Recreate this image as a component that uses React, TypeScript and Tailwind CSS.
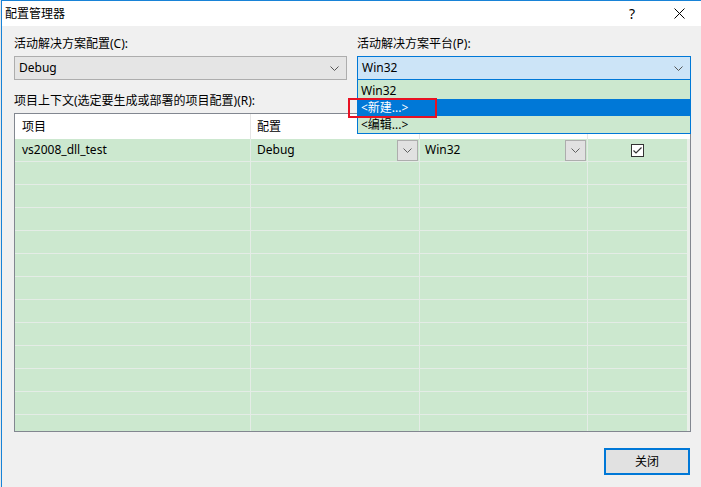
import React from "react";

const Chevron = ({ color = "#555" }: { color?: string }) => (
  <svg width="9" height="5" viewBox="0 0 9 5" className="block">
    <path d="M0.5 0.5 L4.5 4.5 L8.5 0.5" fill="none" stroke={color} strokeWidth="1" />
  </svg>
);

const CellBtn = () => (
  <div className="w-[21px] h-[21px] bg-[#e1e1e1] border border-[#adadad] flex items-center justify-center">
    <Chevron color="#606060" />
  </div>
);

const rows = Array.from({ length: 13 });

export default function App() {
  return (
    <div className="w-[701px] h-[487px] overflow-hidden bg-[#e8e8e8] pl-px font-[family-name:'Noto_Sans','Noto_Sans_CJK_SC',sans-serif] text-[12px] leading-[16px] text-black">
      <div className="w-[700px] h-[487px] border-l border-t border-[#1883d7] bg-[#f0f0f0] flex flex-col">
        {/* title bar */}
        <div className="h-[25px] bg-white flex items-center pl-[3px] shrink-0">
          <span className="flex-1">配置管理器</span>
          <span className="w-[10px] text-[14px] text-center mr-[37px]">?</span>
          <svg width="11" height="11" viewBox="0 0 11 11" className="mr-[16px]">
            <path d="M0.5 0.5 L10.5 10.5 M10.5 0.5 L0.5 10.5" stroke="#000" strokeWidth="1" />
          </svg>
        </div>
        {/* body */}
        <div className="flex-1 flex flex-col pl-[12px] pr-[10px] pt-[10px]">
          <div className="flex gap-[10px]">
            <div className="w-[333px] flex flex-col">
              <span>活动解决方案配置(C):</span>
              <div className="mt-[4px] h-[24px] bg-[#e5e5e5] border border-[#adadad] flex items-center pl-[4px] pr-[7px]">
                <span className="flex-1">Debug</span>
                <Chevron />
              </div>
            </div>
            <div className="w-[334px] flex flex-col relative">
              <span>活动解决方案平台(P):</span>
              <div className="mt-[4px] h-[24px] bg-[#cce4f7] border border-[#0078d7] flex items-center pl-[4px] pr-[7px]">
                <span className="flex-1">Win32</span>
                <Chevron />
              </div>
              {/* dropdown list overlay */}
              <div className="absolute left-0 top-[44px] w-[334px] z-10 bg-[#cce8cf] border border-t-0 border-[#0078d7] flex flex-col">
                <div className="h-[19px] pl-[3px] pt-[2px] flex items-center">Win32</div>
                <div className="h-[17px] pl-[3px] flex items-center bg-[#0078d7] text-white">&lt;新建...&gt;</div>
                <div className="h-[17px] pl-[3px] flex items-center">&lt;编辑...&gt;</div>
              </div>
              <div className="absolute left-[-9px] top-[62px] w-[89px] h-[20px] border-2 border-[#e81123] z-20" />
            </div>
          </div>
          <span className="mt-[13px]">项目上下文(选定要生成或部署的项目配置)(R):</span>
          <div className="mt-[4px] h-[319px] border border-[#828790] bg-[#e9efe9] overflow-hidden flex flex-col">
            <div className="flex h-[25px] shrink-0 bg-white">
              <div className="w-[236px] border-r border-[#e5e5e5] pl-[7px] flex items-center">项目</div>
              <div className="w-[169px] border-r border-[#e5e5e5] pl-[6px] flex items-center">配置</div>
              <div className="w-[168px] border-r border-[#e5e5e5] pl-[6px] flex items-center">平台</div>
              <div className="w-[99px] pl-[6px] flex items-center">生成</div>
            </div>
            {rows.map((_, i) => (
              <div key={i} className="flex h-[23px] shrink-0">
                <div className="w-[236px] bg-[#cce8cf] border-r border-b border-[#e4ece6] pl-[7px] flex items-center">
                  {i === 0 ? "vs2008_dll_test" : ""}
                </div>
                <div className="w-[169px] bg-[#cce8cf] border-r border-b border-[#e4ece6] pl-[6px] pr-[1px] flex items-center">
                  {i === 0 && (
                    <>
                      <span className="flex-1">Debug</span>
                      <CellBtn />
                    </>
                  )}
                </div>
                <div className="w-[168px] bg-[#cce8cf] border-r border-b border-[#e4ece6] pl-[5px] pr-[1px] flex items-center">
                  {i === 0 && (
                    <>
                      <span className="flex-1">Win32</span>
                      <CellBtn />
                    </>
                  )}
                </div>
                <div className="w-[99px] bg-[#cce8cf] border-b border-[#e4ece6] flex items-center justify-center">
                  {i === 0 && (
                    <div className="w-[13px] h-[13px] border border-[#333] bg-white flex items-center justify-center">
                      <svg width="9" height="7" viewBox="0 0 9 7">
                        <path d="M0.5 3.5 L3 6 L8.5 0.5" fill="none" stroke="#333" strokeWidth="1.2" />
                      </svg>
                    </div>
                  )}
                </div>
              </div>
            ))}
          </div>
          <div className="flex justify-end mt-[16px] pr-[1px]">
            <div className="w-[86px] h-[27px] bg-[#e1e1e1] border-2 border-[#0078d7] flex items-center justify-center">
              关闭
            </div>
          </div>
        </div>
      </div>
    </div>
  );
}
